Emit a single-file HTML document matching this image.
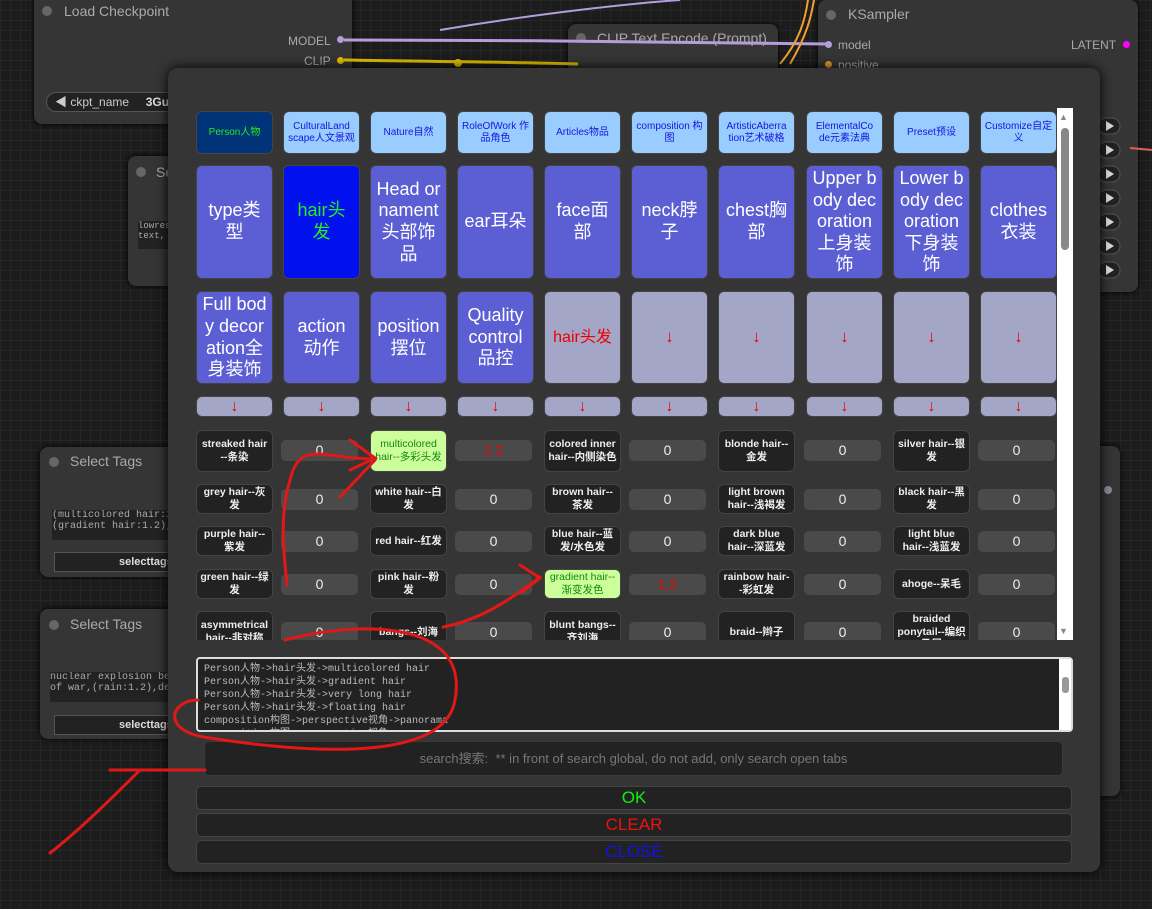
<!DOCTYPE html>
<html><head><meta charset="utf-8"><style>
*{box-sizing:border-box;margin:0;padding:0}
body{width:1152px;height:909px;overflow:hidden;background:#1c1c1c;position:relative;font-family:"Liberation Sans","Noto Sans CJK SC",sans-serif;
background-image:linear-gradient(#262626 1px,transparent 1px),linear-gradient(90deg,#262626 1px,transparent 1px);background-size:10px 10px}
.abs{position:absolute}
.node{position:absolute;background:#353535;border-radius:8px;box-shadow:0 0 6px #000}
.nt{position:absolute;color:#aaa;font-size:14px}
.dot{position:absolute;width:10px;height:10px;border-radius:50%;background:#666}
.dlg{position:absolute;left:168px;top:68px;width:932px;height:804px;background:#353535;border-radius:10px;box-shadow:0 0 12px #000}
.c{position:absolute;border-radius:6px;display:flex;align-items:center;justify-content:center;text-align:center;line-height:1.2;overflow:hidden;border:1px solid #444}
.tab{background:#99ccff;color:#1414e0;font-size:10px;height:43px;top:111px;padding:0 3px}
.big{background:#5b5fd3;color:#fff;font-size:18px;line-height:1.2;padding:0 3px;word-break:break-all}
.g{background:#a4a6c8;color:#e00;font-size:17px}
.ar{background:#a4a6c8;color:#e00;font-size:16px;top:396px;height:21px}
.tag{background:#222;color:#eee;font-size:10.5px;font-weight:bold;padding:0 3px}
.sel{background:#ccff99;color:#118811;font-weight:normal}
.v{position:absolute;background:#4a4a4a;border-radius:5px;height:21px;width:77px;color:#eee;font-size:14px;text-align:center;line-height:21px}
.btn{position:absolute;left:196px;width:876px;height:24px;background:#222;border:1px solid #444;border-radius:5px;text-align:center;font-size:17px;line-height:22px}
</style></head><body>
<div class="node" style="left:34px;top:-10px;width:318px;height:134px"></div>
<div class="dot" style="left:42px;top:6px"></div><div class="nt" style="left:64px;top:3px">Load Checkpoint</div>
<div class="nt" style="left:288px;top:34px;font-size:12px">MODEL</div><div class="dot" style="left:337px;top:36px;width:7px;height:7px;background:#b39ddb"></div>
<div class="nt" style="left:304px;top:54px;font-size:12px">CLIP</div><div class="dot" style="left:337px;top:57px;width:7px;height:7px;background:#e5c000"></div>
<div class="abs" style="left:46px;top:92px;width:130px;height:20px;border-radius:10px;background:#222;border:1px solid #555;color:#ccc;font-size:12px;line-height:18px;padding-left:8px">◀ ckpt_name &nbsp;&nbsp;&nbsp;&nbsp;<b style="color:#ddd">3Gu</b></div>
<div class="node" style="left:568px;top:24px;width:210px;height:60px"></div>
<div class="dot" style="left:576px;top:33px"></div><div class="nt" style="left:597px;top:30px">CLIP Text Encode (Prompt)</div>
<div class="node" style="left:818px;top:0;width:320px;height:292px"></div>
<div class="dot" style="left:826px;top:10px"></div><div class="nt" style="left:848px;top:6px">KSampler</div>
<div class="nt" style="left:838px;top:38px;font-size:12px">model</div><div class="dot" style="left:825px;top:41px;width:7px;height:7px;background:#b39ddb"></div>
<div class="nt" style="left:1071px;top:38px;font-size:12px">LATENT</div><div class="dot" style="left:1123px;top:41px;width:7px;height:7px;background:#f0f"></div>
<div class="nt" style="left:838px;top:58px;font-size:12px">positive</div><div class="dot" style="left:825px;top:61px;width:7px;height:7px;background:#f0a030"></div>
<div class="node" style="left:128px;top:156px;width:60px;height:130px"></div>
<div class="dot" style="left:136px;top:167px"></div><div class="nt" style="left:156px;top:164px">Se</div>
<div class="abs" style="left:138px;top:221px;width:40px;height:28px;background:#222;color:#aaa;font:9px 'Liberation Mono',monospace">lowres<br>text,</div>
<div class="node" style="left:40px;top:447px;width:140px;height:130px"></div>
<div class="dot" style="left:49px;top:457px"></div><div class="nt" style="left:70px;top:453px">Select Tags</div>
<div class="abs" style="left:52px;top:510px;width:130px;height:30px;background:#222;color:#aaa;font:10px 'Liberation Mono',monospace;white-space:nowrap;overflow:hidden">(multicolored hair:1.2<br>(gradient hair:1.2),(v</div>
<div class="abs" style="left:54px;top:552px;width:130px;height:20px;background:#222;border:1px solid #555;color:#ddd;font-size:11px;font-weight:bold;line-height:18px;padding-left:64px">selecttags</div>
<div class="node" style="left:40px;top:609px;width:140px;height:130px"></div>
<div class="dot" style="left:49px;top:620px"></div><div class="nt" style="left:70px;top:616px">Select Tags</div>
<div class="abs" style="left:50px;top:672px;width:130px;height:30px;background:#222;color:#aaa;font:10px 'Liberation Mono',monospace;white-space:nowrap;overflow:hidden">nuclear explosion behi<br>of war,(rain:1.2),deta</div>
<div class="abs" style="left:54px;top:715px;width:130px;height:20px;background:#222;border:1px solid #555;color:#ddd;font-size:11px;font-weight:bold;line-height:18px;padding-left:64px">selecttags</div>
<div class="node" style="left:1060px;top:446px;width:60px;height:350px"></div>
<div class="dot" style="left:1104px;top:486px;width:8px;height:8px;background:#889"></div>
<svg class="abs" style="left:0;top:0" width="1152" height="909">
<path d="M344 40 C500 40 700 42 830 44" stroke="#b39ddb" stroke-width="3" fill="none"/>
<path d="M344 60 C450 62 520 62 578 64" stroke="#e5c000" stroke-width="3" fill="none"/>
<circle cx="458" cy="63" r="4" fill="#e5c000"/>
<path d="M440 30 C560 10 650 2 680 0" stroke="#b39ddb" stroke-width="2" fill="none"/>
<path d="M780 64 C800 40 805 20 808 0 M790 64 C810 30 812 10 814 0" stroke="#f0a030" stroke-width="2" fill="none"/>
<path d="M1130 148 L1152 150" stroke="#e06060" stroke-width="2"/>
<g fill="#222" stroke="#555"><rect x="1098" y="118" width="22" height="16" rx="8"/><rect x="1098" y="142" width="22" height="16" rx="8"/><rect x="1098" y="166" width="22" height="16" rx="8"/><rect x="1098" y="190" width="22" height="16" rx="8"/><rect x="1098" y="214" width="22" height="16" rx="8"/><rect x="1098" y="238" width="22" height="16" rx="8"/><rect x="1098" y="262" width="22" height="16" rx="8"/></g>
<g fill="#ddd"><path d="M1106 121l8 5-8 5z"/><path d="M1106 145l8 5-8 5z"/><path d="M1106 169l8 5-8 5z"/><path d="M1106 193l8 5-8 5z"/><path d="M1106 217l8 5-8 5z"/><path d="M1106 241l8 5-8 5z"/><path d="M1106 265l8 5-8 5z"/></g>
</svg>
<div class="dlg"></div>
<div class="c tab" style="left:196px;width:77px;background:#003377;color:#22ee22">Person人物</div>
<div class="c tab" style="left:283px;width:77px">CulturalLand scape人文景观</div>
<div class="c tab" style="left:370px;width:77px">Nature自然</div>
<div class="c tab" style="left:457px;width:77px">RoleOfWork 作品角色</div>
<div class="c tab" style="left:544px;width:77px">Articles物品</div>
<div class="c tab" style="left:631px;width:77px">composition 构图</div>
<div class="c tab" style="left:718px;width:77px">ArtisticAberra tion艺术破格</div>
<div class="c tab" style="left:806px;width:77px">ElementalCo de元素法典</div>
<div class="c tab" style="left:893px;width:77px">Preset预设</div>
<div class="c tab" style="left:980px;width:77px">Customize自定义</div>
<div class="c big" style="left:196px;top:165px;width:77px;height:114px">type类<br>型</div>
<div class="c big" style="left:283px;top:165px;width:77px;height:114px;background:#0010ee;color:#22ee22">hair头<br>发</div>
<div class="c big" style="left:370px;top:165px;width:77px;height:114px">Head or<br>nament<br>头部饰<br>品</div>
<div class="c big" style="left:457px;top:165px;width:77px;height:114px">ear耳朵</div>
<div class="c big" style="left:544px;top:165px;width:77px;height:114px">face面<br>部</div>
<div class="c big" style="left:631px;top:165px;width:77px;height:114px">neck脖<br>子</div>
<div class="c big" style="left:718px;top:165px;width:77px;height:114px">chest胸<br>部</div>
<div class="c big" style="left:806px;top:165px;width:77px;height:114px">Upper b<br>ody dec<br>oration<br>上身装<br>饰</div>
<div class="c big" style="left:893px;top:165px;width:77px;height:114px">Lower b<br>ody dec<br>oration<br>下身装<br>饰</div>
<div class="c big" style="left:980px;top:165px;width:77px;height:114px">clothes<br>衣装</div>
<div class="c big" style="left:196px;top:291px;width:77px;height:93px">Full bod<br>y decor<br>ation全<br>身装饰</div>
<div class="c big" style="left:283px;top:291px;width:77px;height:93px">action<br>动作</div>
<div class="c big" style="left:370px;top:291px;width:77px;height:93px">position<br>摆位</div>
<div class="c big" style="left:457px;top:291px;width:77px;height:93px">Quality<br>control<br>品控</div>
<div class="c g" style="left:544px;top:291px;width:77px;height:93px;font-size:16px">hair头发</div>
<div class="c g" style="left:631px;top:291px;width:77px;height:93px">↓</div>
<div class="c g" style="left:718px;top:291px;width:77px;height:93px">↓</div>
<div class="c g" style="left:806px;top:291px;width:77px;height:93px">↓</div>
<div class="c g" style="left:893px;top:291px;width:77px;height:93px">↓</div>
<div class="c g" style="left:980px;top:291px;width:77px;height:93px">↓</div>
<div class="c ar" style="left:196px;width:77px">↓</div><div class="c ar" style="left:283px;width:77px">↓</div><div class="c ar" style="left:370px;width:77px">↓</div><div class="c ar" style="left:457px;width:77px">↓</div><div class="c ar" style="left:544px;width:77px">↓</div><div class="c ar" style="left:631px;width:77px">↓</div><div class="c ar" style="left:718px;width:77px">↓</div><div class="c ar" style="left:806px;width:77px">↓</div><div class="c ar" style="left:893px;width:77px">↓</div><div class="c ar" style="left:980px;width:77px">↓</div>
<div class="abs" style="left:190px;top:425px;width:867px;height:215px;overflow:hidden">
<div style="position:absolute;left:-190px;top:-425px;width:1152px;height:909px">
<div class="c tag" style="left:196px;top:430px;width:77px;height:42px">streaked hair --条染</div><div class="v" style="left:281px;top:440px">0</div>
<div class="c tag sel" style="left:370px;top:430px;width:77px;height:42px">multicolored hair--多彩头发</div><div class="v" style="left:455px;top:440px;color:#e00">1.2</div>
<div class="c tag" style="left:544px;top:430px;width:77px;height:42px">colored inner hair--内侧染色</div><div class="v" style="left:629px;top:440px">0</div>
<div class="c tag" style="left:718px;top:430px;width:77px;height:42px">blonde hair--金发</div><div class="v" style="left:804px;top:440px">0</div>
<div class="c tag" style="left:893px;top:430px;width:77px;height:42px">silver hair--银发</div><div class="v" style="left:978px;top:440px">0</div>
<div class="c tag" style="left:196px;top:484px;width:77px;height:30px">grey hair--灰发</div><div class="v" style="left:281px;top:489px">0</div>
<div class="c tag" style="left:370px;top:484px;width:77px;height:30px">white hair--白发</div><div class="v" style="left:455px;top:489px">0</div>
<div class="c tag" style="left:544px;top:484px;width:77px;height:30px">brown hair--茶发</div><div class="v" style="left:629px;top:489px">0</div>
<div class="c tag" style="left:718px;top:484px;width:77px;height:30px">light brown hair--浅褐发</div><div class="v" style="left:804px;top:489px">0</div>
<div class="c tag" style="left:893px;top:484px;width:77px;height:30px">black hair--黑发</div><div class="v" style="left:978px;top:489px">0</div>
<div class="c tag" style="left:196px;top:526px;width:77px;height:30px">purple hair--紫发</div><div class="v" style="left:281px;top:531px">0</div>
<div class="c tag" style="left:370px;top:526px;width:77px;height:30px">red hair--红发</div><div class="v" style="left:455px;top:531px">0</div>
<div class="c tag" style="left:544px;top:526px;width:77px;height:30px">blue hair--蓝发/水色发</div><div class="v" style="left:629px;top:531px">0</div>
<div class="c tag" style="left:718px;top:526px;width:77px;height:30px">dark blue hair--深蓝发</div><div class="v" style="left:804px;top:531px">0</div>
<div class="c tag" style="left:893px;top:526px;width:77px;height:30px">light blue hair--浅蓝发</div><div class="v" style="left:978px;top:531px">0</div>
<div class="c tag" style="left:196px;top:569px;width:77px;height:30px">green hair--绿发</div><div class="v" style="left:281px;top:574px">0</div>
<div class="c tag" style="left:370px;top:569px;width:77px;height:30px">pink hair--粉发</div><div class="v" style="left:455px;top:574px">0</div>
<div class="c tag sel" style="left:544px;top:569px;width:77px;height:30px">gradient hair--渐变发色</div><div class="v" style="left:629px;top:574px;color:#e00">1.2</div>
<div class="c tag" style="left:718px;top:569px;width:77px;height:30px">rainbow hair--彩虹发</div><div class="v" style="left:804px;top:574px">0</div>
<div class="c tag" style="left:893px;top:569px;width:77px;height:30px">ahoge--呆毛</div><div class="v" style="left:978px;top:574px">0</div>
<div class="c tag" style="left:196px;top:611px;width:77px;height:42px">asymmetrical hair--非对称</div><div class="v" style="left:281px;top:622px">0</div>
<div class="c tag" style="left:370px;top:611px;width:77px;height:42px">bangs--刘海</div><div class="v" style="left:455px;top:622px">0</div>
<div class="c tag" style="left:544px;top:611px;width:77px;height:42px">blunt bangs--齐刘海</div><div class="v" style="left:629px;top:622px">0</div>
<div class="c tag" style="left:718px;top:611px;width:77px;height:42px">braid--辫子</div><div class="v" style="left:804px;top:622px">0</div>
<div class="c tag" style="left:893px;top:611px;width:77px;height:42px">braided ponytail--编织马尾</div><div class="v" style="left:978px;top:622px">0</div>
</div></div>
<div class="abs" style="left:1057px;top:108px;width:16px;height:532px;background:#fff"></div>
<div class="abs" style="left:1061px;top:128px;width:8px;height:122px;background:#888;border-radius:4px"></div>
<div class="abs" style="left:1059px;top:112px;color:#888;font-size:9px">▲</div>
<div class="abs" style="left:1059px;top:626px;color:#888;font-size:9px">▼</div>
<div class="abs" style="left:196px;top:657px;width:877px;height:75px;background:#222;border:2px solid #ddd;border-radius:4px;overflow:hidden;padding:4px 6px;color:#bbb;font:10px/13px 'Liberation Mono','Noto Sans CJK SC',monospace">Person人物->hair头发->multicolored hair<br>Person人物->hair头发->gradient hair<br>Person人物->hair头发->very long hair<br>Person人物->hair头发->floating hair<br>composition构图->perspective视角->panorama<br>composition构图->perspective视角->panorama</div>
<div class="abs" style="left:1059px;top:659px;width:12px;height:71px;background:#fff"></div>
<div class="abs" style="left:1062px;top:677px;width:7px;height:16px;background:#999;border-radius:3px"></div>
<div class="abs" style="left:204px;top:741px;width:859px;height:35px;background:#222;border:1px solid #3a3a3a;border-radius:5px;color:#777;font-size:13px;text-align:center;line-height:33px">search搜索:&nbsp; ** in front of search global, do not add, only search open tabs</div>
<div class="btn" style="top:786px;color:#11ee11">OK</div>
<div class="btn" style="top:813px;color:#ee1111">CLEAR</div>
<div class="btn" style="top:840px;color:#1111ee">CLOSE</div>
<svg class="abs" style="left:0;top:0" width="1152" height="909" fill="none" stroke="#e01818" stroke-width="3" stroke-linecap="round">
<path d="M340 497 L375 460 M350 440 L375 458 L350 470 M372 459 C320 458 300 440 290 480 C278 520 285 560 287 585"/>
<path d="M443 627 C480 620 510 600 540 577 M520 565 L540 578 L522 592"/>
<path d="M285 640 C360 620 470 620 455 700 C445 760 320 755 210 738 C160 732 170 700 198 700"/>
<path d="M50 853 C80 830 120 790 140 770 L110 770 M135 770 C160 770 190 770 205 770"/>
</svg>
</body></html>
